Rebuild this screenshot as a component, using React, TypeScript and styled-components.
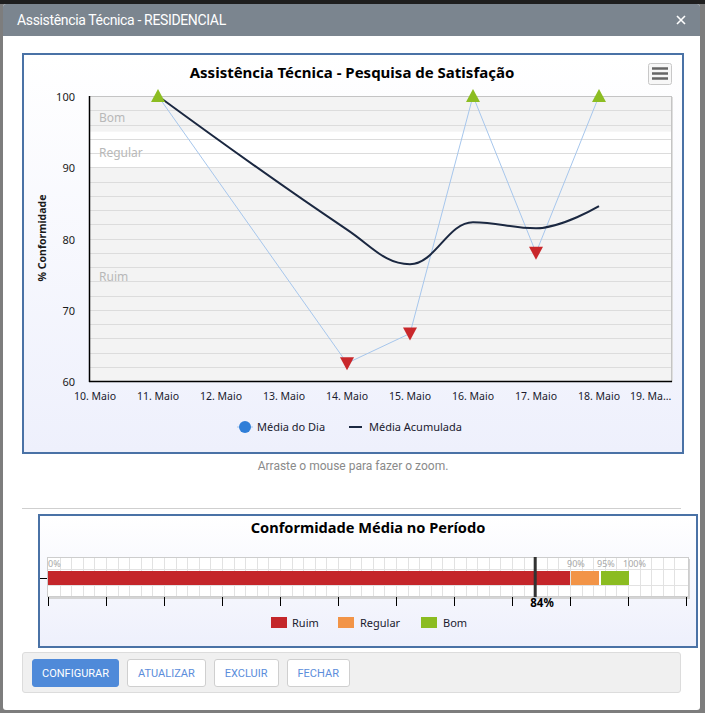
import React from 'react';
import styled, { createGlobalStyle } from 'styled-components';

const GlobalStyle = createGlobalStyle`
  html, body {
    margin: 0;
    padding: 0;
  }
  body {
    width: 705px;
    height: 713px;
    overflow: hidden;
    background: linear-gradient(#1e1e1e 0 4px, #7d7d7d 4px);
    font-family: Roboto, 'Noto Sans', sans-serif;
  }
`;

const CHART_FONT = "'Noto Sans', 'DejaVu Sans', sans-serif";

// chart helpers (page coordinates)
const dayX = (d: number) => 158 + (d - 11) * 63;
const valY = (v: number) => 381 - (v - 60) * 7.125;
const pctX = (p: number) => 48 + p * 5.8;

type Pt = [number, number];

const daily = [
  { day: 11, v: 100 },
  { day: 14, v: 62.5 },
  { day: 15, v: 66.67 },
  { day: 16, v: 100 },
  { day: 17, v: 78 },
  { day: 18, v: 100 },
];

const cumulative = (() => {
  let sum = 0;
  return daily.map((d, i) => {
    sum += d.v;
    return { day: d.day, v: sum / (i + 1) };
  });
})();

function splinePath(pts: Pt[]) {
  const s = 1.5;
  const den = 2.5;
  const cont = pts.map((p, i) => {
    if (i === 0 || i === pts.length - 1) return null;
    const [x, y] = p;
    const [lx, ly] = pts[i - 1];
    const [nx, ny] = pts[i + 1];
    const lcx = (s * x + lx) / den;
    let lcy = (s * y + ly) / den;
    const rcx = (s * x + nx) / den;
    let rcy = (s * y + ny) / den;
    const corr = ((rcy - lcy) * (rcx - x)) / (rcx - lcx) + y - rcy;
    lcy += corr;
    rcy += corr;
    if (lcy > ly && lcy > y) {
      lcy = Math.max(ly, y);
      rcy = 2 * y - lcy;
    } else if (lcy < ly && lcy < y) {
      lcy = Math.min(ly, y);
      rcy = 2 * y - lcy;
    }
    if (rcy > ny && rcy > y) {
      rcy = Math.max(ny, y);
      lcy = 2 * y - rcy;
    } else if (rcy < ny && rcy < y) {
      rcy = Math.min(ny, y);
      lcy = 2 * y - rcy;
    }
    return { lcx, lcy, rcx, rcy };
  });
  let d = `M${pts[0][0]},${pts[0][1]}`;
  for (let i = 1; i < pts.length; i++) {
    const prev = cont[i - 1];
    const cur = cont[i];
    const c1x = prev ? prev.rcx : pts[i - 1][0];
    const c1y = prev ? prev.rcy : pts[i - 1][1];
    const c2x = cur ? cur.lcx : pts[i][0];
    const c2y = cur ? cur.lcy : pts[i][1];
    d += ` C${c1x},${c1y} ${c2x},${c2y} ${pts[i][0]},${pts[i][1]}`;
  }
  return d;
}

const Modal = styled.div`
  margin: 4px 0 0 3px;
  width: 697px;
  height: 706px;
  background: #fff;
  border-radius: 3px;
  overflow: hidden;
  display: flex;
  flex-direction: column;
`;

const Header = styled.div`
  height: 32px;
  flex-shrink: 0;
  background: #7b858f;
  display: flex;
  align-items: center;
  justify-content: space-between;
  padding: 0 14px;
  color: #fff;

  h1 {
    margin: 0;
    font-size: 14px;
    font-weight: 400;
    letter-spacing: -0.35px;
  }
`;

const CloseButton = styled.button`
  border: 0;
  padding: 0;
  background: transparent;
  width: 10px;
  height: 10px;
  display: flex;
  cursor: pointer;
`;

const Body = styled.div`
  padding: 17px 0 0 19px;
  display: flex;
  flex-direction: column;
  align-items: flex-start;
`;

const ChartFrame = styled.div<{ $w: number; $h: number; $indent?: number }>`
  box-sizing: border-box;
  width: ${({ $w }) => $w}px;
  height: ${({ $h }) => $h}px;
  margin-left: ${({ $indent }) => $indent || 0}px;
  border: 2px solid #4a72a6;
  background: linear-gradient(#ffffff, #eef0fc);

  svg {
    display: block;
  }
`;

const Caption = styled.div`
  width: 662px;
  margin-top: 4px;
  text-align: center;
  font-size: 12px;
  line-height: 16px;
  color: #8a8a8a;
`;

const Divider = styled.div`
  width: 659px;
  height: 1px;
  margin-top: 34px;
  background: #cfcfcf;
`;

const SecondFrameWrap = styled.div`
  margin-top: 5px;
`;

const Footer = styled.div`
  box-sizing: border-box;
  width: 659px;
  height: 41px;
  margin-top: 4px;
  padding: 6px 9px;
  display: flex;
  gap: 8px;
  background: #f0f0f0;
  border: 1px solid #dcdcdc;
  border-radius: 3px;
`;

const Button = styled.button<{ $primary?: boolean }>`
  height: 28px;
  padding: 0 ${({ $primary }) => ($primary ? 9 : 10)}px;
  border-radius: 3px;
  border: 1px solid ${({ $primary }) => ($primary ? '#4f8ad9' : '#cfcfcf')};
  background: ${({ $primary }) => ($primary ? '#4f8ad9' : '#fff')};
  color: ${({ $primary }) => ($primary ? '#fff' : '#5b8ddb')};
  font-family: Roboto, sans-serif;
  font-size: 11px;
  text-transform: uppercase;
  cursor: pointer;
`;

const SatisfactionChart = () => {
  const gridVals: number[] = [];
  for (let v = 62; v <= 98; v += 2) gridVals.push(v);
  const dailyPts: Pt[] = daily.map((d) => [dayX(d.day), valY(d.v)]);
  const cumPts: Pt[] = cumulative.map((d) => [dayX(d.day), valY(d.v)]);
  const xLabels = [10, 11, 12, 13, 14, 15, 16, 17, 18];

  return (
    <svg width={658} height={397}>
      <g transform="translate(-24,-55)" fontFamily={CHART_FONT}>
        <text x={352} y={78} textAnchor="middle" fontSize={15} fontWeight={700} fill="#000">
          Assistência Técnica - Pesquisa de Satisfação
        </text>

        {/* export menu */}
        <rect x={648.5} y={63.5} width={23} height={21} rx={2} fill="#f7f7f7" stroke="#c8c8c8" />
        {[68.5, 73.5, 78.5].map((y) => (
          <line key={y} x1={652} x2={668} y1={y} y2={y} stroke="#666" strokeWidth={2.5} />
        ))}

        {/* plot area */}
        <rect x={90} y={96} width={582} height={285} fill="#f3f3f3" />
        <rect x={90} y={valY(95)} width={582} height={valY(90) - valY(95)} fill="#fff" />
        {gridVals.map((v) => (
          <line key={v} x1={90} x2={672} y1={Math.round(valY(v)) + 0.5} y2={Math.round(valY(v)) + 0.5} stroke="#dcdcdc" />
        ))}
        <line x1={89} x2={672} y1={96.5} y2={96.5} stroke="#c4c4c4" />
        <line x1={671.5} x2={671.5} y1={96} y2={381} stroke="#c4c4c4" />
        <line x1={672.5} x2={672.5} y1={97} y2={382} stroke="#dedede" />
        <line x1={89.5} x2={89.5} y1={96} y2={382} stroke="#000" strokeWidth={1.5} />
        <line x1={89} x2={672} y1={381.5} y2={381.5} stroke="#000" strokeWidth={1.5} />

        <g fontSize={12} fill="#b8b8b8">
          <text x={99} y={122}>Bom</text>
          <text x={99} y={157}>Regular</text>
          <text x={99} y={281}>Ruim</text>
        </g>

        {/* y axis */}
        <g fontSize={11} fill="#1a1a1a" textAnchor="end">
          {[100, 90, 80, 70, 60].map((v) => (
            <text key={v} x={75} y={valY(v) + 5}>
              {v}
            </text>
          ))}
        </g>
        <text
          transform="translate(46,238) rotate(-90)"
          textAnchor="middle"
          fontSize={10.5}
          fontWeight={700}
          fill="#1a1a1a"
        >
          % Conformidade
        </text>

        {/* x axis */}
        <g fontSize={10.5} fill="#1a1a2e" textAnchor="middle">
          {xLabels.map((d) => (
            <text key={d} x={dayX(d)} y={400}>
              {d}. Maio
            </text>
          ))}
          <text x={630} y={400} textAnchor="start">
            19. Ma...
          </text>
        </g>

        {/* series */}
        <polyline
          points={dailyPts.map((p) => p.join(',')).join(' ')}
          fill="none"
          stroke="#a6c6ec"
          strokeWidth={1}
        />
        <path d={splinePath(cumPts)} fill="none" stroke="#1b2841" strokeWidth={2} />
        {daily.map((d) => {
          const x = dayX(d.day);
          const y = valY(d.v);
          return d.v >= 95 ? (
            <polygon key={d.day} points={`${x},${y - 7} ${x + 7},${y + 6} ${x - 7},${y + 6}`} fill="#8cbd22" />
          ) : (
            <polygon key={d.day} points={`${x - 7},${y - 6} ${x + 7},${y - 6} ${x},${y + 7}`} fill="#c9272b" />
          );
        })}

        {/* legend */}
        <line x1={237} x2={253} y1={427} y2={427} stroke="#a6c6ec" />
        <circle cx={245} cy={427} r={6} fill="#2f7ed8" />
        <text x={257} y={431} fontSize={11} fill="#1a1a2e">
          Média do Dia
        </text>
        <line x1={349} x2={362} y1={427} y2={427} stroke="#1b2841" strokeWidth={2} />
        <text x={369} y={431} fontSize={11} fill="#1a1a2e">
          Média Acumulada
        </text>
      </g>
    </svg>
  );
};

const ConformityBullet = () => {
  const cols: number[] = [];
  for (let p = 2; p < 110; p += 2) cols.push(p);
  const ticks: number[] = [];
  for (let p = 0; p <= 110; p += 10) ticks.push(p);

  return (
    <svg width={656} height={130}>
      <g transform="translate(-40,-516)" fontFamily={CHART_FONT}>
        <text x={368} y={533} textAnchor="middle" fontSize={14.6} fontWeight={700} fill="#000">
          Conformidade Média no Período
        </text>

        {/* plot frame */}
        <rect x={49} y={559} width={641} height={40} fill="#d4d4d4" />
        <rect x={47.5} y={557.5} width={641} height={39} fill="#fff" stroke="#cdcdcd" />
        {cols.map((p) => (
          <line key={p} x1={Math.round(pctX(p)) + 0.5} x2={Math.round(pctX(p)) + 0.5} y1={558} y2={596} stroke="#e2e2e2" />
        ))}
        <line x1={48} x2={688} y1={569.5} y2={569.5} stroke="#e2e2e2" />
        <line x1={48} x2={688} y1={585.5} y2={585.5} stroke="#e2e2e2" />
        <line x1={38} x2={47} y1={578.5} y2={578.5} stroke="#000" />

        <rect x={pctX(0)} y={571} width={pctX(90) - pctX(0)} height={14} fill="#c4262a" />
        <rect x={pctX(90) + 1} y={571} width={pctX(95) - pctX(90) - 1} height={14} fill="#f29447" />
        <rect x={pctX(95) + 2} y={571} width={pctX(100) - pctX(95) - 1} height={14} fill="#8bbc21" />

        <g fontSize={9} fill="#a8a8a8">
          <text x={48} y={567}>0%</text>
          <text x={567} y={567}>90%</text>
          <text x={597} y={567}>95%</text>
          <text x={623} y={567}>100%</text>
        </g>

        <rect x={pctX(84) - 1.5} y={557} width={3} height={40} fill="#333" />
        {ticks.map((p) => (
          <line key={p} x1={Math.round(pctX(p)) + 0.5} x2={Math.round(pctX(p)) + 0.5} y1={597} y2={606} stroke="#000" />
        ))}
        <text x={542} y={607} textAnchor="middle" fontSize={11.5} fontWeight={700} fill="#000">
          84%
        </text>

        {/* legend */}
        <g fontSize={11} fill="#1a1a2e">
          <rect x={271} y={617} width={16} height={11} fill="#c4262a" />
          <text x={292} y={627}>Ruim</text>
          <rect x={338} y={617} width={16} height={11} fill="#f29447" />
          <text x={360} y={627}>Regular</text>
          <rect x={421} y={617} width={16} height={11} fill="#8bbc21" />
          <text x={443} y={627}>Bom</text>
        </g>
      </g>
    </svg>
  );
};

export default function App() {
  return (
    <>
      <GlobalStyle />
      <Modal>
        <Header>
          <h1>Assistência Técnica - RESIDENCIAL</h1>
          <CloseButton aria-label="Fechar">
            <svg width={10} height={10} viewBox="0 0 10 10">
              <path d="M1 1L9 9M9 1L1 9" stroke="#fff" strokeWidth={1.6} />
            </svg>
          </CloseButton>
        </Header>
        <Body>
          <ChartFrame $w={662} $h={401}>
            <SatisfactionChart />
          </ChartFrame>
          <Caption>Arraste o mouse para fazer o zoom.</Caption>
          <Divider />
          <SecondFrameWrap>
            <ChartFrame $w={660} $h={134} $indent={16}>
              <ConformityBullet />
            </ChartFrame>
          </SecondFrameWrap>
          <Footer>
            <Button $primary>Configurar</Button>
            <Button>Atualizar</Button>
            <Button>Excluir</Button>
            <Button>Fechar</Button>
          </Footer>
        </Body>
      </Modal>
    </>
  );
}
